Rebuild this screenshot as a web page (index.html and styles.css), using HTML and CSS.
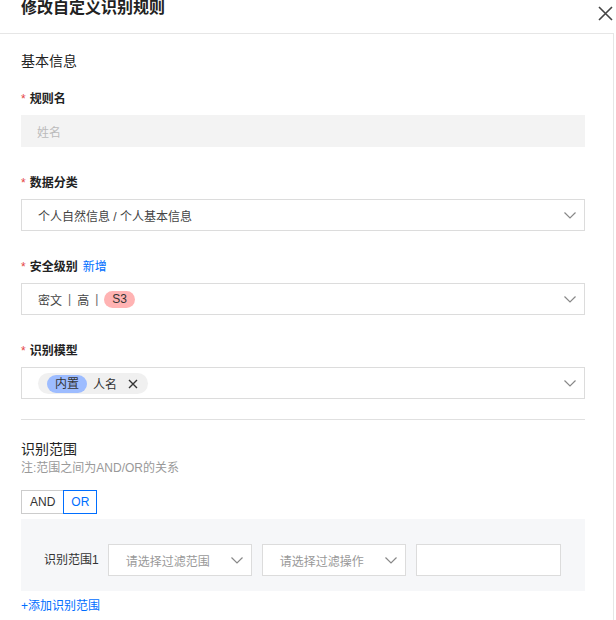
FILE: index.html
```html
<!DOCTYPE html>
<html lang="zh-CN">
<head>
<meta charset="utf-8">
<title>修改自定义识别规则</title>
<link rel="stylesheet" href="styles.css">
</head>
<body>
<div class="drawer">
  <div class="header">
    <h1 class="title">修改自定义识别规则</h1>
    <button class="close" type="button" aria-label="关闭">
      <svg width="15" height="15" viewBox="0 0 15 15"><path d="M1 1L14 14M14 1L1 14" stroke="#444" stroke-width="1.6" fill="none"/></svg>
    </button>
  </div>
  <div class="body">
    <div class="section-title">基本信息</div>

    <div class="item">
      <div class="label"><span class="req">*</span>规则名</div>
      <div class="control disabled"><span class="placeholder">姓名</span></div>
    </div>

    <div class="item">
      <div class="label"><span class="req">*</span>数据分类</div>
      <div class="control select">
        <span class="value">个人自然信息 / 个人基本信息</span>
        <svg class="chev" width="12" height="7" viewBox="0 0 12 7"><path d="M0.5 0.5L6 6L11.5 0.5" stroke="#888" stroke-width="1.2" fill="none"/></svg>
      </div>
    </div>

    <div class="item">
      <div class="label"><span class="req">*</span>安全级别<a class="link">新增</a></div>
      <div class="control select">
        <span class="value">密文<span class="sep">|</span>高<span class="sep">|</span><span class="badge">S3</span></span>
        <svg class="chev" width="12" height="7" viewBox="0 0 12 7"><path d="M0.5 0.5L6 6L11.5 0.5" stroke="#888" stroke-width="1.2" fill="none"/></svg>
      </div>
    </div>

    <div class="item last">
      <div class="label"><span class="req">*</span>识别模型</div>
      <div class="control select">
        <span class="tag"><span class="tag-type">内置</span><span class="tag-name">人名</span>
          <svg class="tag-x" width="10" height="10" viewBox="0 0 10 10"><path d="M1 1L9 9M9 1L1 9" stroke="#333" stroke-width="1.4" fill="none"/></svg>
        </span>
        <svg class="chev" width="12" height="7" viewBox="0 0 12 7"><path d="M0.5 0.5L6 6L11.5 0.5" stroke="#888" stroke-width="1.2" fill="none"/></svg>
      </div>
    </div>

    <div class="divider"></div>

    <div class="section-title scope">识别范围</div>
    <div class="note">注:范围之间为AND/OR的关系</div>

    <div class="toggle">
      <button class="tbtn" type="button">AND</button>
      <button class="tbtn active" type="button">OR</button>
    </div>

    <div class="scope-box">
      <span class="scope-label">识别范围1</span>
      <div class="fsel">
        <span class="ph">请选择过滤范围</span>
        <svg width="12" height="7" viewBox="0 0 12 7"><path d="M0.5 0.5L6 6L11.5 0.5" stroke="#888" stroke-width="1.2" fill="none"/></svg>
      </div>
      <div class="fsel">
        <span class="ph">请选择过滤操作</span>
        <svg width="12" height="7" viewBox="0 0 12 7"><path d="M0.5 0.5L6 6L11.5 0.5" stroke="#888" stroke-width="1.2" fill="none"/></svg>
      </div>
      <div class="finput"></div>
    </div>

    <a class="add-link">+添加识别范围</a>
  </div>
</div>
</body>
</html>
```

FILE: styles.css
```css
* { box-sizing: border-box; }

html, body {
  margin: 0;
  padding: 0;
  background: #fff;
}

body {
  font-family: "Liberation Sans", "Noto Sans CJK SC", sans-serif;
  font-size: 12px;
  color: #333;
  width: 616px;
  height: 620px;
  overflow: hidden;
}

.drawer {
  width: 616px;
  height: 620px;
  display: flex;
  flex-direction: column;
}

.header {
  height: 33px;
  display: flex;
  justify-content: space-between;
  align-items: flex-start;
  padding: 0 3px 0 21px;
  flex: none;
}

.title {
  margin: 0;
  font-size: 16px;
  line-height: 16px;
  font-weight: 700;
  color: #222;
}

.close {
  margin-top: 6px;
  padding: 0;
  border: 0;
  background: none;
  width: 15px;
  height: 15px;
  display: block;
}
.close svg { display: block; }

.body {
  width: 614px;
  flex: 1;
  border-top: 1px solid #e6e6e6;
  border-right: 1px solid #e6e6e6;
  padding: 17px 0 0 21px;
}

.section-title {
  font-size: 14px;
  line-height: 20px;
  color: #222;
  margin-bottom: 20px;
}

.item {
  width: 564px;
  margin-bottom: 28px;
}
.item.last { margin-bottom: 20px; }

.label {
  font-size: 12px;
  line-height: 16px;
  font-weight: 700;
  color: #222;
  margin-bottom: 8px;
  display: flex;
  align-items: center;
}

.req {
  color: #e54545;
  font-weight: 400;
  margin-right: 4px;
}

.link {
  color: #006eff;
  font-weight: 400;
  margin-left: 5px;
}

.control {
  height: 32px;
  display: flex;
  align-items: center;
  padding: 0 8px 0 16px;
}

.disabled {
  background: #f3f3f3;
}
.placeholder { color: #bbb; }

.select {
  border: 1px solid #dcdcdc;
  justify-content: space-between;
}

.value {
  color: #444;
  display: flex;
  align-items: center;
}

.chev { flex: none; }

.sep {
  margin: 0 6px;
  color: #666;
}

.badge {
  display: inline-block;
  height: 17px;
  line-height: 17px;
  padding: 0 8px;
  border-radius: 9px;
  background: #ffb3b3;
  color: #333;
}

.tag {
  display: flex;
  align-items: center;
  height: 21px;
  padding: 0 10px 0 9px;
  border-radius: 11px;
  background: #f0f0f0;
  margin-top: 1px;
}

.tag-type {
  display: inline-block;
  height: 18px;
  line-height: 18px;
  width: 40px;
  text-align: center;
  border-radius: 9px;
  background: #9dbcff;
  color: #333;
}

.tag-name {
  margin-left: 6px;
  color: #333;
}

.tag-x {
  margin-left: 11px;
  display: block;
}

.divider {
  width: 564px;
  height: 1px;
  background: #e0e0e0;
  margin-bottom: 19px;
}

.section-title.scope { margin-bottom: 0; }

.note {
  color: #999;
  line-height: 18px;
  margin-bottom: 13px;
}

.toggle {
  display: flex;
  height: 24px;
}

.tbtn {
  font-family: inherit;
  font-size: 12px;
  height: 24px;
  padding: 0 8px;
  margin: 0;
  border: 1px solid #ccc;
  background: #fff;
  color: #333;
}
.tbtn.active {
  border-color: #006eff;
  color: #006eff;
  margin-left: -1px;
  padding: 0 7px;
}

.scope-box {
  width: 564px;
  height: 72px;
  margin-top: 5px;
  background: #f6f7f9;
  display: flex;
  align-items: flex-start;
  gap: 10px;
  padding: 25px 0 0 23px;
}

.scope-label {
  line-height: 32px;
  color: #333;
  margin-right: -1px;
}

.fsel {
  width: 144px;
  height: 32px;
  border: 1px solid #dcdcdc;
  background: #fff;
  display: flex;
  align-items: center;
  justify-content: space-between;
  padding: 0 8px 0 17px;
}
.ph { color: #999; }

.finput {
  width: 145px;
  height: 32px;
  border: 1px solid #dcdcdc;
  background: #fff;
}

.add-link {
  display: block;
  margin-top: 7px;
  line-height: 16px;
  color: #006eff;
}
```
